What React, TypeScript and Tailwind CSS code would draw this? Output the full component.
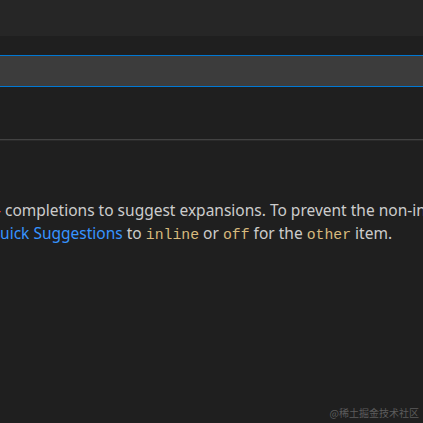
import React from "react"

const mono = { fontFamily: "'Liberation Mono', monospace" }

export default function App() {
  return (
    <div className="h-[423px] w-[423px] overflow-hidden bg-[#1f1f1f] relative" style={{ fontFamily: "'Noto Sans', 'Open Sans', sans-serif" }}>
      <div className="h-[36px] bg-[#262626]" />
      <div className="h-[19px]" />
      <div className="h-[32px] border-y border-[#0078d4] bg-[#3c3c3c]" />
      <div className="h-[52px]" />
      <div className="h-[2px] border-t border-[#424242] bg-[#2a2a2a]" />
      <div className="mt-[58px] whitespace-nowrap text-[15.5px] leading-[23px] text-[#cccccc]">
        <div className="-ml-[4px]">
          <span className="text-[#f14c4c]">-</span>{" "}
          completions to suggest expansions. To prevent the non-inline
        </div>
        <div className="-ml-[12px]">
          <span className="text-[#3794ff]">Quick Suggestions</span> to{" "}
          <code className="text-[14.8px] text-[#d7ba7d]" style={mono}>inline</code> or{" "}
          <code className="text-[14.8px] text-[#d7ba7d]" style={mono}>off</code> for the{" "}
          <code className="text-[14.8px] text-[#d7ba7d]" style={mono}>other</code> item.
        </div>
      </div>
      <div className="absolute right-[4px] bottom-[4px] text-[10px] leading-[12px] text-[#5c5c5c]" style={{ fontFamily: "'Noto Sans CJK SC', sans-serif" }}>
        @稀土掘金技术社区
      </div>
    </div>
  )
}
